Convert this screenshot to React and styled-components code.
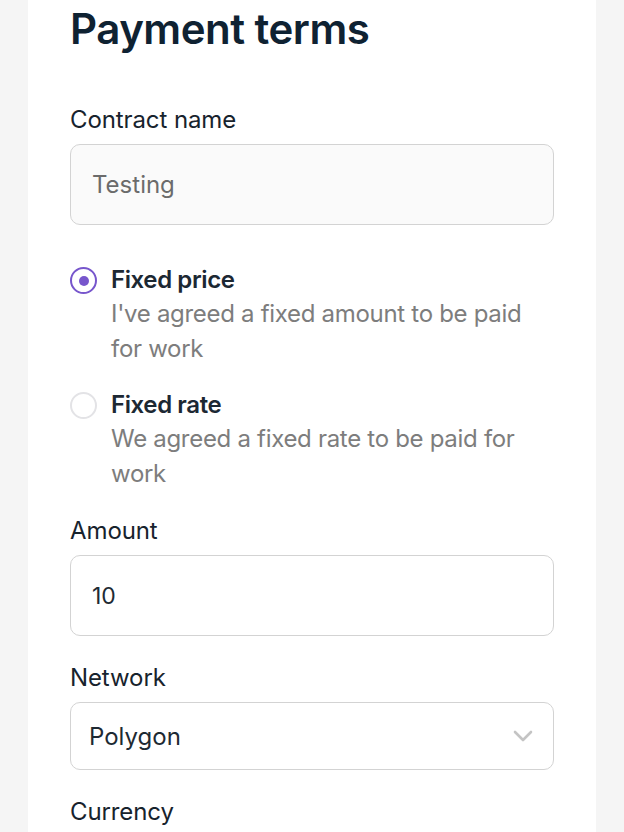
import React from "react";
import styled, { createGlobalStyle } from "styled-components";

const Global = createGlobalStyle`
  html, body { margin: 0; padding: 0; background: #f5f5f5; }
  body { font-family: Inter, "Noto Sans", sans-serif; -webkit-font-smoothing: antialiased; }
  * { box-sizing: border-box; }
`;

const Page = styled.div`
  padding: 0 28px;
  min-height: 832px;
`;

const Panel = styled.div`
  background: #ffffff;
  min-height: 832px;
  padding: 4px 42px 0;
  display: flex;
  flex-direction: column;
`;

const Title = styled.h1`
  margin: 0;
  font-size: 42px;
  line-height: 50px;
  font-weight: 600;
  letter-spacing: -0.5px;
  color: #0f2232;
`;

const Field = styled.div`
  display: flex;
  flex-direction: column;
  gap: 10px;
  margin-top: ${(p) => p.$mt}px;
`;

const Label = styled.label`
  font-size: 24px;
  line-height: 28px;
  font-weight: 400;
  color: #17232d;
  letter-spacing: -0.1px;
`;

const Input = styled.div`
  height: ${(p) => p.$h}px;
  border: 1.5px solid #d3d3d3;
  border-radius: 10px;
  background: ${(p) => (p.$muted ? "#fafafa" : "#ffffff")};
  display: flex;
  align-items: center;
  justify-content: space-between;
  padding: 0 20px 0 ${(p) => p.$pl}px;
  font-size: ${(p) => p.$fs}px;
  color: ${(p) => (p.$muted ? "#6b6b6b" : "#1e2a33")};
`;

const RadioGroup = styled.div`
  display: flex;
  flex-direction: column;
  gap: 23px;
  margin-top: 39px;
`;

const Option = styled.div`
  display: flex;
  gap: 14px;
  align-items: flex-start;
`;

const Circle = styled.span`
  flex: none;
  width: 27px;
  height: 27px;
  border-radius: 50%;
  margin-top: 3px;
  border: 2px solid ${(p) => (p.$on ? "#7756cc" : "#e3e3e6")};
  display: flex;
  align-items: center;
  justify-content: center;
  &::after {
    content: "";
    width: 10px;
    height: 10px;
    border-radius: 50%;
    background: ${(p) => (p.$on ? "#7756cc" : "transparent")};
  }
`;

const OptionText = styled.div`
  display: flex;
  flex-direction: column;
`;

const OptionTitle = styled.div`
  font-size: 24px;
  line-height: 32px;
  font-weight: 600;
  color: #1c2833;
  letter-spacing: -0.4px;
`;

const OptionDesc = styled.div`
  font-size: 24px;
  line-height: 35px;
  color: #7d7d7d;
  letter-spacing: -0.3px;
`;

const Chevron = () => (
  <svg width="20" height="12" viewBox="0 0 20 12" fill="none">
    <path d="M2 2l8 8 8-8" stroke="#c4c4c4" strokeWidth="2.6" strokeLinecap="round" strokeLinejoin="round" />
  </svg>
);

export default function App() {
  return (
    <>
      <Global />
      <Page>
        <Panel>
          <Title>Payment terms</Title>
          <Field $mt={52}>
            <Label>Contract name</Label>
            <Input $h={81} $pl={21} $fs={24} $muted>Testing</Input>
          </Field>
          <RadioGroup>
            <Option>
              <Circle $on />
              <OptionText>
                <OptionTitle>Fixed price</OptionTitle>
                <OptionDesc>I've agreed a fixed amount to be paid for work</OptionDesc>
              </OptionText>
            </Option>
            <Option>
              <Circle />
              <OptionText>
                <OptionTitle>Fixed rate</OptionTitle>
                <OptionDesc>We agreed a fixed rate to be paid for work</OptionDesc>
              </OptionText>
            </Option>
          </RadioGroup>
          <Field $mt={26}>
            <Label>Amount</Label>
            <Input $h={81} $pl={21} $fs={23}>10</Input>
          </Field>
          <Field $mt={28}>
            <Label>Network</Label>
            <Input $h={68} $pl={18} $fs={24}>
              Polygon
              <Chevron />
            </Input>
          </Field>
          <Field $mt={28}>
            <Label>Currency</Label>
          </Field>
        </Panel>
      </Page>
    </>
  );
}
